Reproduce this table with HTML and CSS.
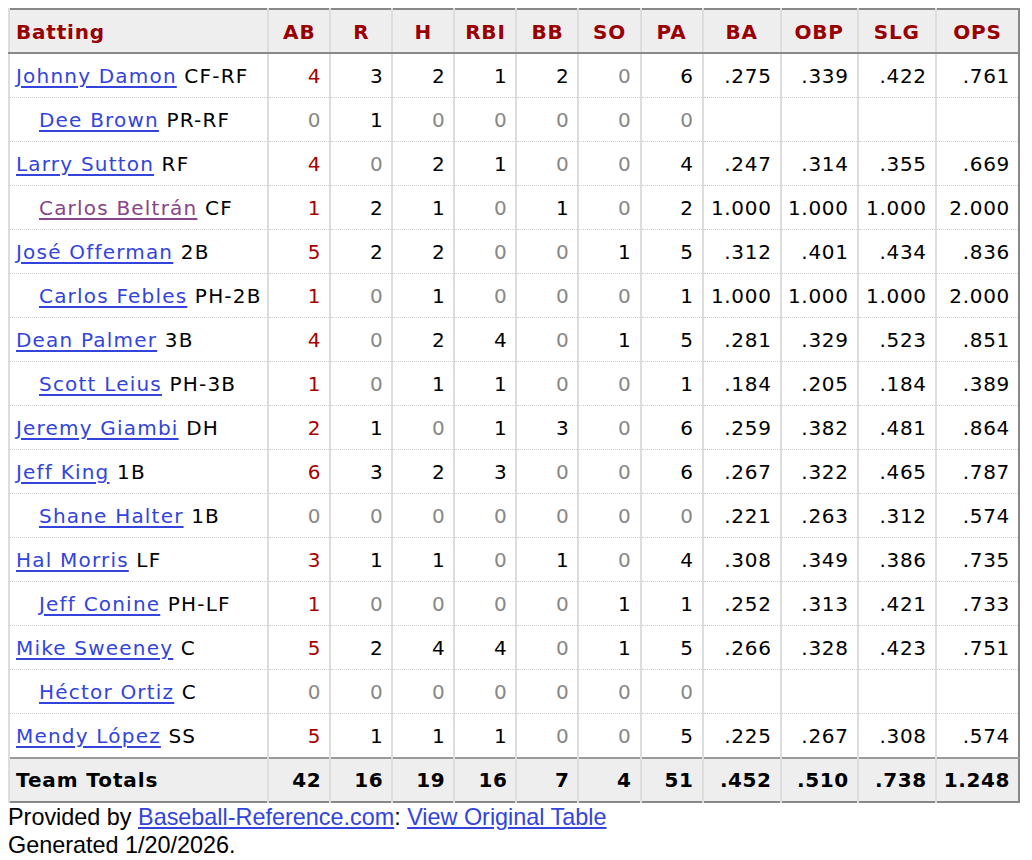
FILE: index.html
```html
<!DOCTYPE html>
<html>
<head>
<meta charset="utf-8">
<link rel="stylesheet" href="styles.css">
</head>
<body>
<table class="stats">
<colgroup>
<col class="c-name"><col class="c-n"><col class="c-n"><col class="c-n"><col class="c-n"><col class="c-n"><col class="c-n"><col class="c-n"><col class="c-ba"><col class="c-obp"><col class="c-slg"><col class="c-ops">
</colgroup>
<thead>
<tr><th class="left">Batting</th><th>AB</th><th>R</th><th>H</th><th>RBI</th><th>BB</th><th>SO</th><th>PA</th><th>BA</th><th>OBP</th><th>SLG</th><th>OPS</th></tr>
</thead>
<tbody>
<tr><td class="name"><a href="#">Johnny Damon</a> CF-RF</td><td class="ab">4</td><td>3</td><td>2</td><td>1</td><td>2</td><td class="z">0</td><td>6</td><td>.275</td><td>.339</td><td>.422</td><td>.761</td></tr>
<tr><td class="name sub"><a href="#">Dee Brown</a> PR-RF</td><td class="z">0</td><td>1</td><td class="z">0</td><td class="z">0</td><td class="z">0</td><td class="z">0</td><td class="z">0</td><td></td><td></td><td></td><td></td></tr>
<tr><td class="name"><a href="#">Larry Sutton</a> RF</td><td class="ab">4</td><td class="z">0</td><td>2</td><td>1</td><td class="z">0</td><td class="z">0</td><td>4</td><td>.247</td><td>.314</td><td>.355</td><td>.669</td></tr>
<tr><td class="name sub"><a href="#" class="visited">Carlos Beltrán</a> CF</td><td class="ab">1</td><td>2</td><td>1</td><td class="z">0</td><td>1</td><td class="z">0</td><td>2</td><td>1.000</td><td>1.000</td><td>1.000</td><td>2.000</td></tr>
<tr><td class="name"><a href="#">José Offerman</a> 2B</td><td class="ab">5</td><td>2</td><td>2</td><td class="z">0</td><td class="z">0</td><td>1</td><td>5</td><td>.312</td><td>.401</td><td>.434</td><td>.836</td></tr>
<tr><td class="name sub"><a href="#">Carlos Febles</a> PH-2B</td><td class="ab">1</td><td class="z">0</td><td>1</td><td class="z">0</td><td class="z">0</td><td class="z">0</td><td>1</td><td>1.000</td><td>1.000</td><td>1.000</td><td>2.000</td></tr>
<tr><td class="name"><a href="#">Dean Palmer</a> 3B</td><td class="ab">4</td><td class="z">0</td><td>2</td><td>4</td><td class="z">0</td><td>1</td><td>5</td><td>.281</td><td>.329</td><td>.523</td><td>.851</td></tr>
<tr><td class="name sub"><a href="#">Scott Leius</a> PH-3B</td><td class="ab">1</td><td class="z">0</td><td>1</td><td>1</td><td class="z">0</td><td class="z">0</td><td>1</td><td>.184</td><td>.205</td><td>.184</td><td>.389</td></tr>
<tr><td class="name"><a href="#">Jeremy Giambi</a> DH</td><td class="ab">2</td><td>1</td><td class="z">0</td><td>1</td><td>3</td><td class="z">0</td><td>6</td><td>.259</td><td>.382</td><td>.481</td><td>.864</td></tr>
<tr><td class="name"><a href="#">Jeff King</a> 1B</td><td class="ab">6</td><td>3</td><td>2</td><td>3</td><td class="z">0</td><td class="z">0</td><td>6</td><td>.267</td><td>.322</td><td>.465</td><td>.787</td></tr>
<tr><td class="name sub"><a href="#">Shane Halter</a> 1B</td><td class="z">0</td><td class="z">0</td><td class="z">0</td><td class="z">0</td><td class="z">0</td><td class="z">0</td><td class="z">0</td><td>.221</td><td>.263</td><td>.312</td><td>.574</td></tr>
<tr><td class="name"><a href="#">Hal Morris</a> LF</td><td class="ab">3</td><td>1</td><td>1</td><td class="z">0</td><td>1</td><td class="z">0</td><td>4</td><td>.308</td><td>.349</td><td>.386</td><td>.735</td></tr>
<tr><td class="name sub"><a href="#">Jeff Conine</a> PH-LF</td><td class="ab">1</td><td class="z">0</td><td class="z">0</td><td class="z">0</td><td class="z">0</td><td>1</td><td>1</td><td>.252</td><td>.313</td><td>.421</td><td>.733</td></tr>
<tr><td class="name"><a href="#">Mike Sweeney</a> C</td><td class="ab">5</td><td>2</td><td>4</td><td>4</td><td class="z">0</td><td>1</td><td>5</td><td>.266</td><td>.328</td><td>.423</td><td>.751</td></tr>
<tr><td class="name sub"><a href="#">Héctor Ortiz</a> C</td><td class="z">0</td><td class="z">0</td><td class="z">0</td><td class="z">0</td><td class="z">0</td><td class="z">0</td><td class="z">0</td><td></td><td></td><td></td><td></td></tr>
<tr><td class="name"><a href="#">Mendy López</a> SS</td><td class="ab">5</td><td>1</td><td>1</td><td>1</td><td class="z">0</td><td class="z">0</td><td>5</td><td>.225</td><td>.267</td><td>.308</td><td>.574</td></tr>
</tbody>
<tfoot>
<tr><td class="name">Team Totals</td><td>42</td><td>16</td><td>19</td><td>16</td><td>7</td><td>4</td><td>51</td><td>.452</td><td>.510</td><td>.738</td><td>1.248</td></tr>
</tfoot>
</table>
<div class="credit">
<div>Provided by <a href="#">Baseball-Reference.com</a>: <a href="#">View Original Table</a></div>
<div>Generated 1/20/2026.</div>
</div>
</body>
</html>
```

FILE: styles.css
```css
body {
  margin: 8px;
  background: #fff;
  font-family: "Liberation Sans", Arial, sans-serif;
}
.stats {
  border-collapse: collapse;
  table-layout: fixed;
  width: 1012px;
  border: 2px solid #888;
  font-family: "DejaVu Sans", Verdana, sans-serif;
  font-size: 20px;
  color: #000;
}
.c-name { width: 259px; }
.c-n { width: 62px; }
.c-ba { width: 78px; }
.c-obp { width: 77px; }
.c-slg { width: 78px; }
.c-ops { width: 83px; }
.stats th {
  background: #eee;
  color: #990000;
  font-weight: bold;
  text-align: center;
  height: 41px;
  padding: 1px 4px 0;
  border-left: 2px solid #ddd;
  border-bottom: 2px solid #888;
  white-space: nowrap;
  letter-spacing: 0.8px;
}
.stats th.left { text-align: left; padding-left: 6px; }
.stats td {
  height: 43px;
  padding: 0 8px 0 4px;
  text-align: right;
  white-space: nowrap;
  border-left: 2px solid #ddd;
  border-top: 1px dotted #ccc;
  letter-spacing: 0.7px;
}
.stats td.name {
  text-align: left;
  padding-left: 6px;
  letter-spacing: 1.2px;
}
.stats td.sub { padding-left: 29px; }
.stats td.ab { color: #a00; }
.stats td.z { color: #888; }
.stats a { color: #3344dd; text-underline-offset: 3px; }
.stats a.visited { color: #884488; }
.stats tfoot td {
  background: #eee;
  font-weight: bold;
  border-top: 2px solid #999;
  height: 42px;
  letter-spacing: 0.6px;
}
.stats tfoot td.name { letter-spacing: 0.9px; }
.credit {
  font-size: 23.4px;
  line-height: 28px;
  color: #000;
}
.credit a { color: #3344dd; }
```
